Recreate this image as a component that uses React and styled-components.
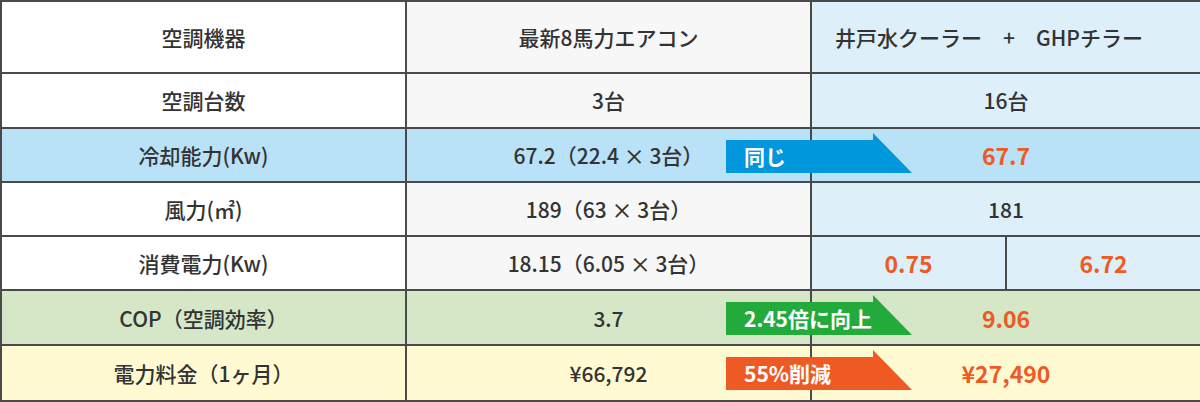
import React from "react";
import styled, { createGlobalStyle } from "styled-components";

const GlobalStyle = createGlobalStyle`
  html, body {
    margin: 0;
    padding: 0;
    background: #ffffff;
  }
  body {
    font-family: "Noto Sans CJK JP", "Noto Sans", sans-serif;
    color: #333333;
  }
`;

const Wrapper = styled.div`
  position: relative;
  width: 1200px;
  height: 402px;
`;

const Table = styled.table`
  width: 1200px;
  height: 402px;
  border-collapse: collapse;
  table-layout: fixed;
  border: 2px solid #4a4a4a;
`;

const Cell = styled.td`
  border: 2px solid #4a4a4a;
  text-align: center;
  vertical-align: middle;
  padding: 0 ${({ $padRight }) => $padRight || 0}px 0 0;
  font-size: ${({ $accent }) => ($accent ? 23 : 21)}px;
  color: ${({ $accent }) => ($accent ? "#ef5a24" : "#333333")};
  font-weight: ${({ $accent }) => ($accent ? 700 : 500)};
  background: ${({ $bg }) => $bg};
  white-space: nowrap;
`;

const Row = styled.tr`
  height: ${({ $h }) => $h}px;
`;

const ArrowBox = styled.div`
  position: absolute;
  left: 726px;
  top: ${({ $top }) => $top}px;
  width: 186px;
  height: 40px;
`;

const ArrowLabel = styled.span`
  position: absolute;
  left: 18px;
  top: 7px;
  height: 33px;
  line-height: 33px;
  color: #ffffff;
  font-size: 21px;
  font-weight: 700;
  white-space: nowrap;
`;

const Arrow = ({ top, color, label }) => (
  <ArrowBox $top={top}>
    <svg width="186" height="40" viewBox="0 0 186 40">
      <polygon points="0,7 147,7 147,0 186,40 0,40" fill={color} />
    </svg>
    <ArrowLabel>{label}</ArrowLabel>
  </ArrowBox>
);

const W = "#ffffff";
const G = "#f7f7f7";
const B = "#ddeff9";

const rows = [
  { h: 72, bg: [W, G, B], cells: ["空調機器", "最新8馬力エアコン", "井戸水クーラー　+　GHPチラー"], pad: 34 },
  { h: 54, bg: [W, G, B], cells: ["空調台数", "3台", "16台"] },
  { h: 54, bg: ["#b9e1f7", "#b9e1f7", "#b9e1f7"], cells: ["冷却能力(Kw)", "67.2（22.4 × 3台）", "67.7"], accent: true },
  { h: 54, bg: [W, G, B], cells: ["風力(㎡)", "189（63 × 3台）", "181"] },
  { h: 54, bg: [W, G, B], split: true, cells: ["消費電力(Kw)", "18.15（6.05 × 3台）", "0.75", "6.72"] },
  { h: 54, bg: ["#d5e7c7", "#d5e7c7", "#d5e7c7"], cells: ["COP（空調効率）", "3.7", "9.06"], accent: true },
  { h: 56, bg: ["#fffad2", "#fffad2", "#fffad2"], cells: ["電力料金（1ヶ月）", "¥66,792", "¥27,490"], accent: true },
];

const App = () => (
  <Wrapper>
    <GlobalStyle />
    <Table>
      <colgroup>
        <col style={{ width: 405 }} />
        <col style={{ width: 405 }} />
        <col style={{ width: 195 }} />
        <col style={{ width: 195 }} />
      </colgroup>
      <tbody>
        {rows.map((row) => (
          <Row $h={row.h} key={row.cells[0]}>
            <Cell $bg={row.bg[0]}>{row.cells[0]}</Cell>
            <Cell $bg={row.bg[1]}>{row.cells[1]}</Cell>
            {row.split ? (
              <>
                <Cell $bg={row.bg[2]} $accent>
                  {row.cells[2]}
                </Cell>
                <Cell $bg={row.bg[2]} $accent>
                  {row.cells[3]}
                </Cell>
              </>
            ) : (
              <Cell
                colSpan={2}
                $bg={row.bg[2]}
                $accent={row.accent}
                $padRight={row.pad}
              >
                {row.cells[2]}
              </Cell>
            )}
          </Row>
        ))}
      </tbody>
    </Table>
    <Arrow top={133} color="#0097dd" label="同じ" />
    <Arrow top={295} color="#22aa3b" label="2.45倍に向上" />
    <Arrow top={350} color="#ef5a24" label="55%削減" />
  </Wrapper>
);

export default App;
